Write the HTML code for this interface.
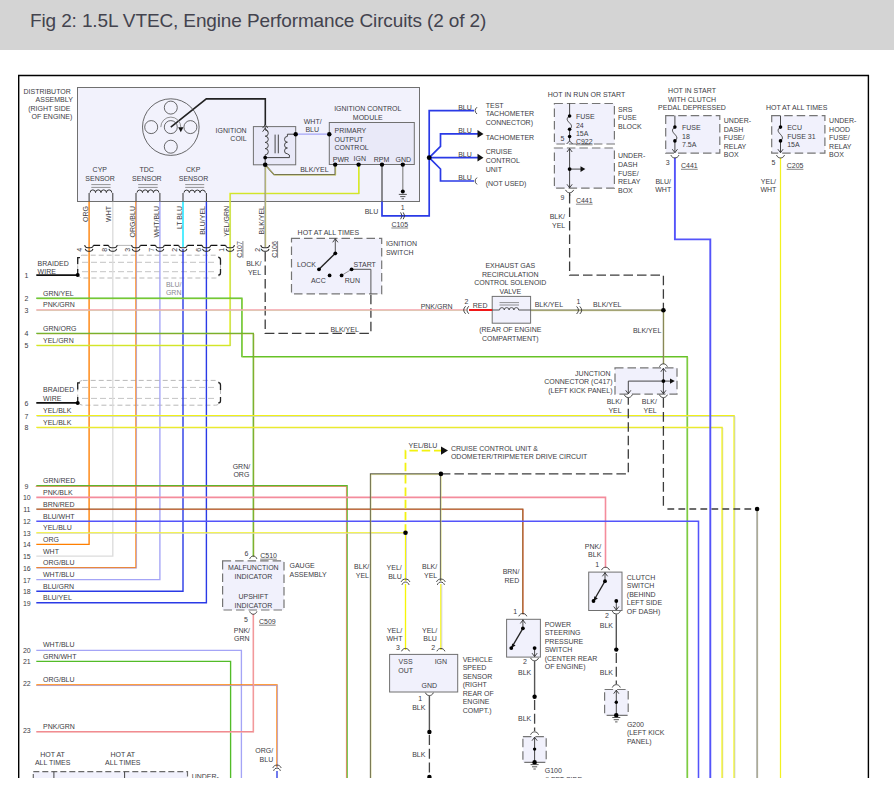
<!DOCTYPE html>
<html lang="en"><head><meta charset="utf-8"><title>Fig 2: 1.5L VTEC, Engine Performance Circuits (2 of 2)</title>
<style>
html,body{margin:0;padding:0;background:#fff;}
body{width:894px;height:807px;overflow:hidden;position:relative;font-family:"Liberation Sans",Arial,sans-serif;}
.hdr{position:absolute;left:0;top:0;width:894px;height:49.5px;background:#d4d4d4;}
.hdr span{position:absolute;left:30px;top:8px;font-size:19px;line-height:26px;color:#43434e;letter-spacing:-0.125px;white-space:nowrap;}
svg{position:absolute;left:0;top:0;}
</style></head><body>
<div class="hdr"><span>Fig 2: 1.5L VTEC, Engine Performance Circuits (2 of 2)</span></div>
<svg width="894" height="778" viewBox="0 0 894 778">
<g fill="none" stroke-linecap="butt" stroke-linejoin="miter">
<rect x="77.5" y="87.5" width="342.0" height="114.0" fill="#f2f2fc" stroke="#707070" stroke-width="1"/>
<rect x="253.4" y="126.6" width="42.3" height="38.2" fill="#e9e9f8" stroke="#707070" stroke-width="1"/>
<rect x="329.3" y="122.5" width="85.0" height="42.0" fill="#e9e9f8" stroke="#707070" stroke-width="1"/>
<rect x="291.5" y="238.3" width="90.2" height="55.6" fill="#f1f1fc" stroke="#757575" stroke-width="1.2" stroke-dasharray="8.5 4"/>
<rect x="554.4" y="103.5" width="60.0" height="40.5" fill="#f1f1fc" stroke="#757575" stroke-width="1.2" stroke-dasharray="8.5 4"/>
<rect x="554.4" y="148" width="60.0" height="40.2" fill="#f1f1fc" stroke="#757575" stroke-width="1.2" stroke-dasharray="8.5 4"/>
<rect x="665.7" y="115.6" width="54.1" height="37.6" fill="#f1f1fc" stroke="#757575" stroke-width="1.2" stroke-dasharray="8.5 4"/>
<rect x="771.7" y="115.6" width="53.2" height="37.6" fill="#f1f1fc" stroke="#757575" stroke-width="1.2" stroke-dasharray="8.5 4"/>
<rect x="492.2" y="296.4" width="38.4" height="26.8" fill="#f1f1fc" stroke="#707070" stroke-width="1"/>
<rect x="615" y="367.8" width="62.0" height="26.4" fill="#f1f1fc" stroke="#757575" stroke-width="1.2" stroke-dasharray="8.5 4"/>
<rect x="222.6" y="560.9" width="61.4" height="49.1" fill="#f1f1fc" stroke="#757575" stroke-width="1.2" stroke-dasharray="8.5 4"/>
<rect x="389.6" y="654.4" width="68.1" height="37.6" fill="#f1f1fc" stroke="#707070" stroke-width="1"/>
<rect x="506.6" y="619.3" width="33.8" height="37.8" fill="#f1f1fc" stroke="#707070" stroke-width="1"/>
<rect x="588.7" y="572.1" width="33.3" height="38.4" fill="#f1f1fc" stroke="#707070" stroke-width="1"/>
<rect x="522.9" y="736.6" width="23.3" height="25.8" fill="#f1f1fc" stroke="#757575" stroke-width="1.2" stroke-dasharray="8.5 4"/>
<rect x="604.6" y="689.5" width="23.6" height="25.8" fill="#f1f1fc" stroke="#757575" stroke-width="1.2" stroke-dasharray="8.5 4"/>
<rect x="33.3" y="771.7" width="154.2" height="12" fill="#f1f1fc" stroke="#6a6a6a" stroke-width="1.2" stroke-dasharray="6 3"/>
<path d="M53.9,771.7 V778 M124.6,771.7 V778" stroke="#444" stroke-width="1"/>
<rect x="77.7" y="255.2" width="142.8" height="22.8" rx="5" fill="none" stroke="#b8b8b8" stroke-width="1" stroke-dasharray="5 3"/>
<path d="M82,262.3 H217 M82,271.7 H217" stroke="#c4c4c4" stroke-width="1" stroke-dasharray="6 3"/>
<path d="M80,257.7 H77.7 V264.2 M77.7,269.1 V275.1" stroke="#222" stroke-width="1.3"/>
<path d="M218.2,257.4 Q220.5,257.4 220.5,259.7 V264.7 M220.5,269.1 V273.1 Q220.5,275.1 218.2,275.1" stroke="#222" stroke-width="1.3"/>
<rect x="77.7" y="380.4" width="142.8" height="24.8" rx="5" fill="none" stroke="#b8b8b8" stroke-width="1" stroke-dasharray="5 3"/>
<path d="M82,387.4 H217 M82,398.4 H217" stroke="#c4c4c4" stroke-width="1" stroke-dasharray="6 3"/>
<path d="M80,382.9 H77.7 V389.4 M77.7,396.9 V402.9" stroke="#222" stroke-width="1.3"/>
<path d="M218.2,382.6 Q220.5,382.6 220.5,384.9 V389.9 M220.5,396.9 V400.9 Q220.5,402.9 218.2,402.9" stroke="#222" stroke-width="1.3"/>
<path d="M89.1,201.5 V544.3 H36.3" stroke="#ff7f00" stroke-width="1.35"/>
<path d="M112.8,201.5 V556.1 H36.3" stroke="#dcdcdc" stroke-width="1.35"/>
<path d="M136,201.5 V567.6 H36.3" stroke="#ff7f00" stroke-width="1.35"/>
<path d="M136,201.5 V567.6 H36.3" stroke="#a4a4f6" stroke-width="0.7" transform="translate(0.55 0.55)"/>
<path d="M159.9,201.5 V579.6 H36.3" stroke="#a4a4f6" stroke-width="1.35"/>
<path d="M183,201.5 V247" stroke="#00e4ff" stroke-width="1.35"/>
<path d="M183,249 V591.2 H36.3" stroke="#2a3ae6" stroke-width="1.4"/>
<path d="M206.4,201.5 V602.7 H36.3" stroke="#2a3ae6" stroke-width="1.4"/>
<path d="M36.3,345.3 H230 V193.3 H358.7 V164.6" stroke="#e2ee1e" stroke-width="1.35"/>
<path d="M36.3,345.3 H230 V193.3 H358.7 V164.6" stroke="#b8d440" stroke-width="0.55" transform="translate(0.55 0.55)"/>
<path d="M265.2,164.8 V247" stroke="#8c8c84" stroke-width="1.35"/>
<path d="M265.2,164.8 V247" stroke="#c8c860" stroke-width="0.7" transform="translate(0.55 0.55)"/>
<path d="M265.2,252 V333.3 H370.9 V293.9" stroke="#3c3c3c" stroke-width="1.3" stroke-dasharray="9.5 4"/>
<path d="M36.3,298.2 H241.9 V356.6 H687.2 V778" stroke="#52bc28" stroke-width="1.35"/>
<path d="M36.3,298.2 H241.9 V356.6 H687.2 V778" stroke="#9ad23a" stroke-width="0.7" transform="translate(0.55 0.55)"/>
<path d="M36.3,310 H466" stroke="#f4a0a8" stroke-width="1.3"/>
<path d="M36.3,310 H466" stroke="#c8d4a8" stroke-width="0.5" transform="translate(0.55 0.55)"/>
<path d="M469,310 H492.2" stroke="#f01818" stroke-width="2"/>
<path d="M530.6,310.2 H663.4 V364" stroke="#6c6c4c" stroke-width="1.2"/>
<path d="M530.6,310.2 H663.4 V364" stroke="#c0c070" stroke-width="0.6" transform="translate(0.55 0.55)"/>
<path d="M36.3,333.3 H253.3 V556.6" stroke="#52bc28" stroke-width="1.35"/>
<path d="M36.3,333.3 H253.3 V556.6" stroke="#b0a030" stroke-width="0.7" transform="translate(0.55 0.55)"/>
<path d="M36.3,415.6 H734.1 V778" stroke="#f6f608" stroke-width="1.35"/>
<path d="M36.3,415.6 H734.1 V778" stroke="#b8c4d4" stroke-width="0.7" transform="translate(0.8 0.8)"/>
<path d="M36.3,427.3 H722.1 V778" stroke="#f6f608" stroke-width="1.35"/>
<path d="M36.3,427.3 H722.1 V778" stroke="#d0d090" stroke-width="0.6" transform="translate(0.7 0.7)"/>
<path d="M36.3,485.7 H347.1 V778" stroke="#52bc28" stroke-width="1.35"/>
<path d="M36.3,485.7 H347.1 V778" stroke="#f07050" stroke-width="0.7" transform="translate(-0.7 0.7)"/>
<path d="M36.3,497.4 H605.5 V567.9" stroke="#f48c9c" stroke-width="1.6"/>
<path d="M36.3,509 H522.8 V614.2" stroke="#9a561a" stroke-width="1.25"/>
<path d="M36.3,509 H522.8 V614.2" stroke="#d85838" stroke-width="0.45" transform="translate(0.55 0.55)"/>
<path d="M36.3,521.2 H698.5 V778" stroke="#5454fa" stroke-width="1.55"/>
<path d="M36.3,532.8 H405.5" stroke="#f6f608" stroke-width="1.35"/>
<path d="M36.3,532.8 H405.5" stroke="#d0d0e8" stroke-width="0.7" transform="translate(0.55 0.55)"/>
<path d="M405.5,532.8 V450.6 H441" stroke="#f2f210" stroke-width="1.8" stroke-dasharray="8.5 3.8"/>
<path d="M405.5,532.8 V581" stroke="#f6f608" stroke-width="1.3"/>
<path d="M406.5,532.8 V581" stroke="#b8b8f0" stroke-width="0.6"/>
<path d="M405.5,584 V650" stroke="#f6f608" stroke-width="1.35"/>
<path d="M370.4,778 V473.9 H440.9" stroke="#62624c" stroke-width="1.1"/>
<path d="M370.4,778 V473.9 H440.9" stroke="#c0c060" stroke-width="0.5" transform="translate(0.7 0.7)"/>
<path d="M440.4,473.9 V581" stroke="#5a5a52" stroke-width="1.0"/>
<path d="M441.3,473.9 V581" stroke="#d4d468" stroke-width="0.6"/>
<path d="M440.9,584 V650" stroke="#f6f608" stroke-width="1.3"/>
<path d="M441.9,584 V650" stroke="#b8b8f0" stroke-width="0.6"/>
<path d="M440.9,473.9 H628.3 V398" stroke="#3c3c3c" stroke-width="1.3" stroke-dasharray="9.5 4"/>
<path d="M663.4,398 V509" stroke="#3c3c3c" stroke-width="1.3" stroke-dasharray="9.8 4.2"/>
<path d="M663.4,509 H757.1" stroke="#3c3c3c" stroke-width="1.3" stroke-dasharray="6.8 4.2" stroke-dashoffset="-4"/>
<path d="M757.1,509 V778" stroke="#8c8c84" stroke-width="1.35"/>
<path d="M757.1,509 V778" stroke="#b0b090" stroke-width="0.7" transform="translate(0.55 0.55)"/>
<path d="M569.6,194 V275.1 H663.4 V310.2" stroke="#3c3c3c" stroke-width="1.3" stroke-dasharray="9.5 4"/>
<path d="M674.9,157.7 V239.4 H710.3 V778" stroke="#5454fa" stroke-width="1.9"/>
<path d="M780.5,157.7 V778" stroke="#f2f220" stroke-width="1.25"/>
<path d="M36.3,650.4 H241.4 V778" stroke="#a4a4f6" stroke-width="1.35"/>
<path d="M36.3,661.4 H230.6 V778" stroke="#52bc28" stroke-width="1.35"/>
<path d="M36.3,685 H277 V767" stroke="#ff7f00" stroke-width="1.35"/>
<path d="M36.3,685 H277 V767" stroke="#a4a4f6" stroke-width="0.7" transform="translate(0.55 0.55)"/>
<path d="M277,771 V778" stroke="#2a3ae6" stroke-width="1.35"/>
<path d="M36.3,731.8 H253.3 V614" stroke="#f0868e" stroke-width="1.4"/>
<path d="M36.3,731.8 H253.3 V614" stroke="#f4c0b8" stroke-width="0.5" transform="translate(0.55 0.55)"/>
<path d="M36.3,275.1 H77.7" stroke="#111" stroke-width="1.6"/>
<path d="M36.3,402.9 H77.7" stroke="#111" stroke-width="1.6"/>
<circle cx="77.7" cy="275.1" r="2" fill="#000"/>
<circle cx="77.7" cy="402.9" r="2" fill="#000"/>
<path d="M382,164.6 V201.5" stroke="#333" stroke-width="1.1"/>
<path d="M382,201.5 V215.8 H429.2 V110.6 H474" stroke="#2a3ae6" stroke-width="1.7"/>
<path d="M429.2,157.7 L440.5,146.4 V133.9 H478 M429.2,157.7 H478 M429.2,157.7 L440.5,169 V181 H474" stroke="#2a3ae6" stroke-width="1.7"/>
<path d="M295.7,134.2 H329.3" stroke="#a4a4f6" stroke-width="1.2"/>
<path d="M265.2,164.8 L274,174.6 H335.2 V164.6" stroke="#55554a" stroke-width="1.35"/>
<path d="M265.2,164.8 L274,174.6 H335.2 V164.6" stroke="#d8d860" stroke-width="0.7" transform="translate(0.55 0.55)"/>
<path d="M402.8,164.6 V191.6" stroke="#888" stroke-width="1.2"/>
<path d="M398.8,194.4 H406.8 M400.2,196.6 H405.40000000000003 M401.6,198.8 H404.0" stroke="#444" stroke-width="0.9"/>
<path d="M170.8,127.1 L206.3,98.9 H265.3 V125" stroke="#222" stroke-width="1.6"/>
<g stroke="#444" stroke-width="0.8">
<circle cx="170.8" cy="127.1" r="28.3"/>
<circle cx="170.8" cy="107.6" r="6.5"/>
<circle cx="151.2" cy="127.1" r="6.5"/>
<circle cx="190.4" cy="127.1" r="6.5"/>
<circle cx="170.8" cy="146.7" r="6.5"/>
<circle cx="170.8" cy="127.1" r="6.5"/>
<path d="M160.8,127.1 A10,10 0 0 1 180.8,127.1" stroke="#777"/>
</g>
<path d="M178.2,127.2 H183.4 L180.8,132.2 Z" fill="#111" stroke="none"/>
<path d="M89.1,201.5 V193 M112.8,201.5 V193 M90.1,192.6 A2.71,2.71 0 0 1 95.52,192.6 A2.71,2.71 0 0 1 100.95,192.6 A2.71,2.71 0 0 1 106.38,192.6 A2.71,2.71 0 0 1 111.80,192.6 " stroke="#333" stroke-width="1"/>
<path d="M91.3,184.6 H110.6 M91.3,187.4 H110.6" stroke="#777" stroke-width="0.8"/>
<path d="M136,201.5 V193 M159.9,201.5 V193 M137,192.6 A2.74,2.74 0 0 1 142.47,192.6 A2.74,2.74 0 0 1 147.95,192.6 A2.74,2.74 0 0 1 153.43,192.6 A2.74,2.74 0 0 1 158.90,192.6 " stroke="#333" stroke-width="1"/>
<path d="M138.2,184.6 H157.70000000000002 M138.2,187.4 H157.70000000000002" stroke="#777" stroke-width="0.8"/>
<path d="M183,201.5 V193 M206.4,201.5 V193 M184,192.6 A2.68,2.68 0 0 1 189.35,192.6 A2.68,2.68 0 0 1 194.70,192.6 A2.68,2.68 0 0 1 200.05,192.6 A2.68,2.68 0 0 1 205.40,192.6 " stroke="#333" stroke-width="1"/>
<path d="M185.2,184.6 H204.20000000000002 M185.2,187.4 H204.20000000000002" stroke="#777" stroke-width="0.8"/>
<g stroke="#333" stroke-width="0.9">
<path d="M265.2,126.6 V130 A3,3 0 0 1 265.2,136.2 A3,3 0 0 1 265.2,142.4 A3,3 0 0 1 265.2,148.6 A3,3 0 0 1 265.2,154.8 V164.8"/>
<path d="M275.1,134.6 V153.3 M278.3,134.6 V153.3"/>
<path d="M295.7,134.2 H287.4 V136.4 A2.9,2.9 0 0 0 287.4,142.2 A2.9,2.9 0 0 0 287.4,148.0 A2.9,2.9 0 0 0 287.4,153.8 L289.4,155 V157.6 H265.2"/>
</g>
<path d="M262.59999999999997,128.1 L265.2,124.6 L267.8,128.1" stroke="#333" stroke-width="0.9"/>
<path d="M262.59999999999997,131.7 L265.2,128.2 L267.8,131.7" stroke="#333" stroke-width="0.9"/>
<circle cx="265.2" cy="157.6" r="1.9" fill="#000"/>
<circle cx="265.2" cy="164.8" r="2.3" fill="#000"/>
<circle cx="295.7" cy="134.2" r="2.2" fill="#000"/>
<circle cx="329.3" cy="134.2" r="2.2" fill="#000"/>
<circle cx="335.2" cy="164.6" r="2.2" fill="#000"/>
<circle cx="358.6" cy="164.6" r="2.2" fill="#000"/>
<circle cx="382.0" cy="164.6" r="2.2" fill="#000"/>
<circle cx="402.8" cy="164.6" r="2.2" fill="#000"/>
<circle cx="402.8" cy="191.4" r="2.0" fill="#000"/>
<circle cx="429.2" cy="157.7" r="2.4" fill="#000"/>
<path d="M477.5,130 L483.5,133.9 L477.5,137.8 Z M477.5,153.8 L483.5,157.7 L477.5,161.6 Z" fill="#111" stroke="none"/>
<path d="M477,107.2 Q473.2,110.6 477,114 M477,177.6 Q473.2,181 477,184.4" stroke="#333" stroke-width="0.9"/>
<path d="M400.6,212.4 Q403.6,215.8 400.6,219.2 M403.2,212.4 Q406.2,215.8 403.2,219.2" stroke="#333" stroke-width="0.9"/>
<path d="M93.5,245.4 H100.1 M103.4,245.4 H108.39999999999999" stroke="#111" stroke-width="1.3"/>
<path d="M117.2,245.4 H131.6" stroke="#999" stroke-width="0.7"/>
<path d="M140.4,245.4 H147.0 M150.5,245.4 H155.5" stroke="#111" stroke-width="1.3"/>
<path d="M164.3,245.4 H170.9 M173.6,245.4 H178.6" stroke="#111" stroke-width="1.3"/>
<path d="M187.4,245.4 H194.0 M197.0,245.4 H202.0" stroke="#111" stroke-width="1.3"/>
<path d="M210.8,245.4 H217.4 M220.6,245.4 H225.6" stroke="#111" stroke-width="1.3"/>
<path d="M84.6,245.2 Q85.3,247.8 87.7,247.8 H90.5 Q92.9,247.8 93.6,245.2" stroke="#2a2a2a" stroke-width="1.1"/>
<path d="M85.2,248.9 Q85.9,251.2 87.9,251.2 H90.3 Q92.3,251.2 93.0,248.9" stroke="#2a2a2a" stroke-width="1.1"/>
<path d="M108.3,245.2 Q109.0,247.8 111.4,247.8 H114.2 Q116.6,247.8 117.3,245.2" stroke="#2a2a2a" stroke-width="1.1"/>
<path d="M108.9,248.9 Q109.6,251.2 111.6,251.2 H114.0 Q116.0,251.2 116.7,248.9" stroke="#2a2a2a" stroke-width="1.1"/>
<path d="M131.5,245.2 Q132.2,247.8 134.6,247.8 H137.4 Q139.8,247.8 140.5,245.2" stroke="#2a2a2a" stroke-width="1.1"/>
<path d="M132.1,248.9 Q132.8,251.2 134.8,251.2 H137.2 Q139.2,251.2 139.9,248.9" stroke="#2a2a2a" stroke-width="1.1"/>
<path d="M155.4,245.2 Q156.1,247.8 158.5,247.8 H161.3 Q163.7,247.8 164.4,245.2" stroke="#2a2a2a" stroke-width="1.1"/>
<path d="M156.0,248.9 Q156.7,251.2 158.7,251.2 H161.1 Q163.1,251.2 163.8,248.9" stroke="#2a2a2a" stroke-width="1.1"/>
<path d="M178.5,245.2 Q179.2,247.8 181.6,247.8 H184.4 Q186.8,247.8 187.5,245.2" stroke="#2a2a2a" stroke-width="1.1"/>
<path d="M179.1,248.9 Q179.8,251.2 181.8,251.2 H184.2 Q186.2,251.2 186.9,248.9" stroke="#2a2a2a" stroke-width="1.1"/>
<path d="M201.9,245.2 Q202.6,247.8 205.0,247.8 H207.8 Q210.2,247.8 210.9,245.2" stroke="#2a2a2a" stroke-width="1.1"/>
<path d="M202.5,248.9 Q203.2,251.2 205.2,251.2 H207.6 Q209.6,251.2 210.3,248.9" stroke="#2a2a2a" stroke-width="1.1"/>
<path d="M225.5,245.2 Q226.2,247.8 228.6,247.8 H231.4 Q233.8,247.8 234.5,245.2" stroke="#2a2a2a" stroke-width="1.1"/>
<path d="M226.1,248.9 Q226.8,251.2 228.8,251.2 H231.2 Q233.2,251.2 233.9,248.9" stroke="#2a2a2a" stroke-width="1.1"/>
<path d="M260.7,245.2 Q261.4,247.8 263.8,247.8 H266.6 Q269.0,247.8 269.7,245.2" stroke="#2a2a2a" stroke-width="1.1"/>
<path d="M261.3,248.9 Q262.0,251.2 264.0,251.2 H266.4 Q268.4,251.2 269.1,248.9" stroke="#2a2a2a" stroke-width="1.1"/>
<g stroke="#444" stroke-width="0.9">
<path d="M335.3,238.3 V253.3"/>
<path d="M351.6,269.3 H370.9 V293.9"/>
<path d="M341.6,275.4 L351.6,269.3" stroke="#888"/>
</g>
<path d="M335.3,253.3 L319,269.3" stroke="#222" stroke-width="1.4"/>
<path d="M332.7,242.3 L335.3,238.8 L337.90000000000003,242.3" stroke="#333" stroke-width="0.9"/>
<circle cx="335.3" cy="253.3" r="1.9" fill="#000"/>
<circle cx="319.0" cy="269.3" r="1.9" fill="#000"/>
<circle cx="329.6" cy="275.4" r="1.9" fill="#000"/>
<circle cx="341.6" cy="275.4" r="1.9" fill="#000"/>
<circle cx="351.6" cy="269.3" r="1.9" fill="#000"/>
<path d="M569.6,103.5 V116 C561.6,121.3 576.6,123.9 569.6,129.2 V141" stroke="#333" stroke-width="0.9"/>
<circle cx="569.6" cy="116.0" r="1.8" fill="#000"/>
<circle cx="569.6" cy="129.2" r="1.8" fill="#000"/>
<circle cx="569.6" cy="136.5" r="1.8" fill="#000"/>
<path d="M566.6,144 L569.6,141 L572.6,144" stroke="#333" stroke-width="0.9"/>
<path d="M674.9,115.6 V127.1 C666.9,132.6 681.9,135.4 674.9,140.9 V152.7" stroke="#333" stroke-width="0.9"/>
<circle cx="674.9" cy="127.1" r="1.8" fill="#000"/>
<circle cx="674.9" cy="140.9" r="1.8" fill="#000"/>
<path d="M672.3,149.2 L674.9,152.7 L677.5,149.2" stroke="#333" stroke-width="0.9"/>
<path d="M780.5,115.6 V127.1 C772.5,132.6 787.5,135.4 780.5,140.9 V152.7" stroke="#333" stroke-width="0.9"/>
<circle cx="780.5" cy="127.1" r="1.8" fill="#000"/>
<circle cx="780.5" cy="140.9" r="1.8" fill="#000"/>
<path d="M777.9,149.2 L780.5,152.7 L783.1,149.2" stroke="#333" stroke-width="0.9"/>
<path d="M670.9,155.1 C672.3,158.9 677.5,158.9 678.9,155.1" stroke="#333" stroke-width="0.9"/>
<path d="M776.5,155.1 C777.9,158.9 783.1,158.9 784.5,155.1" stroke="#333" stroke-width="0.9"/>
<path d="M569.6,148.5 V187.8 M569.6,169.1 H581" stroke="#333" stroke-width="0.9"/>
<path d="M567.0,152.0 L569.6,148.5 L572.2,152.0" stroke="#333" stroke-width="0.9"/>
<path d="M567.0,184.3 L569.6,187.8 L572.2,184.3" stroke="#333" stroke-width="0.9"/>
<circle cx="569.6" cy="169.1" r="1.9" fill="#000"/>
<path d="M580.5,166.3 L585.3,169.1 L580.5,171.9 Z" fill="#111" stroke="none"/>
<path d="M565.6,189.9 C567.0,193.7 572.2,193.7 573.6,189.9" stroke="#333" stroke-width="0.9"/>
<path d="M569.6,193 V196" stroke="#333" stroke-width="1.2"/>
<path d="M492.2,310 H499.5 A2.4,2.4 0 0 1 504.3,310 A2.4,2.4 0 0 1 509.1,310 A2.4,2.4 0 0 1 513.9,310 A2.4,2.4 0 0 1 518.7,310 H530.6" stroke="#444" stroke-width="0.9"/>
<path d="M499.5,302.6 H519 M499.5,305 H519" stroke="#777" stroke-width="0.8"/>
<path d="M465.6,306.2 Q461.8,310 465.6,313.8 M468.8,306.2 Q465,310 468.8,313.8" stroke="#333" stroke-width="0.9"/>
<path d="M576.6,306.4 Q580.4,310.2 576.6,314 M579.8,306.4 Q583.6,310.2 579.8,314" stroke="#333" stroke-width="0.9"/>
<circle cx="663.4" cy="310.2" r="2.3" fill="#000"/>
<path d="M663.4,368.3 V393.8 M663.4,381.1 H671 M663.4,381.1 H628.3 V393.8" stroke="#333" stroke-width="0.9"/>
<path d="M660.8,371.8 L663.4,368.3 L666.0,371.8" stroke="#333" stroke-width="0.9"/>
<path d="M660.8,390.3 L663.4,393.8 L666.0,390.3" stroke="#333" stroke-width="0.9"/>
<path d="M625.6999999999999,390.3 L628.3,393.8 L630.9,390.3" stroke="#333" stroke-width="0.9"/>
<circle cx="663.4" cy="381.1" r="1.9" fill="#000"/>
<path d="M670,378.5 L674.8,381.1 L670,383.7 Z" fill="#111" stroke="none"/>
<path d="M659.4,366.7 C660.8,362.9 666.0,362.9 667.4,366.7" stroke="#333" stroke-width="0.9"/>
<path d="M659.4,394.7 C660.8,398.5 666.0,398.5 667.4,394.7" stroke="#333" stroke-width="0.9"/>
<path d="M624.3,394.7 C625.7,398.5 630.9,398.5 632.3,394.7" stroke="#333" stroke-width="0.9"/>
<circle cx="440.9" cy="473.9" r="2.3" fill="#000"/>
<circle cx="405.5" cy="532.8" r="2.3" fill="#000"/>
<circle cx="757.1" cy="509.0" r="2.3" fill="#000"/>
<path d="M441,446.4 L448,450.6 L441,454.8 Z" fill="#111" stroke="none"/>
<path d="M401.1,581.9 C402.6,578.1 408.4,578.1 409.9,581.9" stroke="#333" stroke-width="0.9"/>
<path d="M401.9,584.9 C403.2,581.1 407.8,581.1 409.1,584.9" stroke="#333" stroke-width="0.9"/>
<path d="M401.5,651.3 C402.9,647.5 408.1,647.5 409.5,651.3" stroke="#333" stroke-width="0.9"/>
<path d="M436.5,581.9 C438.0,578.1 443.8,578.1 445.3,581.9" stroke="#333" stroke-width="0.9"/>
<path d="M437.3,584.9 C438.6,581.1 443.2,581.1 444.5,584.9" stroke="#333" stroke-width="0.9"/>
<path d="M436.9,651.3 C438.3,647.5 443.5,647.5 444.9,651.3" stroke="#333" stroke-width="0.9"/>
<path d="M249.7,558.9 C251.0,555.1 255.6,555.1 256.9,558.9" stroke="#333" stroke-width="0.9"/>
<path d="M249.7,611.4 C251.0,615.2 255.6,615.2 256.9,611.4" stroke="#333" stroke-width="0.9"/>
<path d="M272.8,767.9 C274.3,764.1 279.7,764.1 281.2,767.9" stroke="#333" stroke-width="0.9"/>
<path d="M273.6,770.9 C274.8,767.1 279.2,767.1 280.4,770.9" stroke="#333" stroke-width="0.9"/>
<path d="M601.5,570.1 C602.9,566.3 608.1,566.3 609.5,570.1" stroke="#333" stroke-width="0.9"/>
<path d="M518.8,616.3 C520.2,612.5 525.4,612.5 526.8,616.3" stroke="#333" stroke-width="0.9"/>
<path d="M425.4,692.7 C426.8,696.5 432.0,696.5 433.4,692.7" stroke="#333" stroke-width="0.9"/>
<path d="M429.4,696 V732" stroke="#555" stroke-width="1.4"/>
<path d="M429.4,735 V778" stroke="#444" stroke-width="1.3" stroke-dasharray="10 3.8"/>
<circle cx="429.4" cy="732.0" r="2.2" fill="#000"/>
<circle cx="429.4" cy="777.0" r="2.2" fill="#000"/>
<path d="M522.9,619.3 V628.3 M534.6,648.1 V656.6" stroke="#333" stroke-width="0.9"/>
<path d="M522.9,628.3 L511.3,648.1" stroke="#222" stroke-width="1.3"/>
<path d="M520.3,623.5 L522.9,620 L525.5,623.5" stroke="#333" stroke-width="0.9"/>
<path d="M532.0,653.1 L534.6,656.6 L537.2,653.1" stroke="#333" stroke-width="0.9"/>
<path d="M511.3,648.1 L515.6,645.6 L512.2,643.4 Z" fill="#111" stroke="none"/>
<circle cx="522.9" cy="628.3" r="1.9" fill="#000"/>
<circle cx="511.3" cy="648.1" r="1.9" fill="#000"/>
<circle cx="534.6" cy="648.1" r="1.9" fill="#000"/>
<path d="M530.6,657.9 C532.0,661.7 537.2,661.7 538.6,657.9" stroke="#333" stroke-width="0.9"/>
<path d="M534.6,661 V696.7" stroke="#555" stroke-width="1.4"/>
<path d="M534.6,700 V731" stroke="#444" stroke-width="1.3" stroke-dasharray="10 3.8"/>
<circle cx="534.6" cy="696.7" r="2.2" fill="#000"/>
<path d="M530.6,734.7 C532.0,730.9 537.2,730.9 538.6,734.7" stroke="#333" stroke-width="0.9"/>
<path d="M534.6,737 V762.4" stroke="#333" stroke-width="0.9"/>
<path d="M532.0,740.7 L534.6,737.2 L537.2,740.7" stroke="#333" stroke-width="0.9"/>
<circle cx="534.6" cy="749.1" r="1.7" fill="#000"/>
<circle cx="534.6" cy="762.4" r="2.3" fill="#000"/>
<path d="M530.6,764.6 H538.6 M532.0,766.8000000000001 H537.2 M533.4,769.0 H535.8000000000001" stroke="#444" stroke-width="0.9"/>
<path d="M605,572.1 V581.2 M616.3,601 V610" stroke="#333" stroke-width="0.9"/>
<path d="M605,581.2 L593.5,601" stroke="#222" stroke-width="1.3"/>
<path d="M602.4,576.3 L605,572.8 L607.6,576.3" stroke="#333" stroke-width="0.9"/>
<path d="M613.6999999999999,606.5 L616.3,610 L618.9,606.5" stroke="#333" stroke-width="0.9"/>
<path d="M593.5,601 L597.8,598.5 L594.4,596.3 Z" fill="#111" stroke="none"/>
<circle cx="605.0" cy="581.2" r="1.9" fill="#000"/>
<circle cx="593.5" cy="601.0" r="1.9" fill="#000"/>
<circle cx="616.3" cy="601.0" r="1.9" fill="#000"/>
<path d="M612.3,611.1 C613.7,614.9 618.9,614.9 620.3,611.1" stroke="#333" stroke-width="0.9"/>
<path d="M616.3,614.2 V649.6" stroke="#555" stroke-width="1.4"/>
<path d="M616.3,653 V684" stroke="#444" stroke-width="1.3" stroke-dasharray="10 3.8"/>
<circle cx="616.3" cy="649.6" r="2.2" fill="#000"/>
<path d="M612.3,687.5 C613.7,683.7 618.9,683.7 620.3,687.5" stroke="#333" stroke-width="0.9"/>
<path d="M616.3,690 V715.3" stroke="#333" stroke-width="0.9"/>
<path d="M613.6999999999999,693.7 L616.3,690.2 L618.9,693.7" stroke="#333" stroke-width="0.9"/>
<circle cx="616.3" cy="702.2" r="1.7" fill="#000"/>
<circle cx="616.3" cy="715.3" r="2.3" fill="#000"/>
<path d="M612.3,717.5 H620.3 M613.6999999999999,719.7 H618.9 M615.0999999999999,721.9 H617.5" stroke="#444" stroke-width="0.9"/>
<path d="M18.7,778 V75.5 H868.4 V778" stroke="#000" stroke-width="1.4"/>
</g>
<g font-family="Liberation Sans, Arial, sans-serif" font-size="7" fill="#3c3c44">
<text x="23.5" y="94.2" text-anchor="start">DISTRIBUTOR</text>
<text x="35.6" y="102.3" text-anchor="start">ASSEMBLY</text>
<text x="28.2" y="110.9" text-anchor="start">(RIGHT SIDE</text>
<text x="31.5" y="119.1" text-anchor="start">OF ENGINE)</text>
<text x="99.8" y="172.2" text-anchor="middle">CYP</text>
<text x="100.1" y="181.0" text-anchor="middle">SENSOR</text>
<text x="146.6" y="172.2" text-anchor="middle">TDC</text>
<text x="146.9" y="181.0" text-anchor="middle">SENSOR</text>
<text x="193.2" y="172.2" text-anchor="middle">CKP</text>
<text x="193.5" y="181.0" text-anchor="middle">SENSOR</text>
<text x="246.7" y="133.1" text-anchor="end">IGNITION</text>
<text x="246.7" y="141.1" text-anchor="end">COIL</text>
<text x="367.8" y="110.8" text-anchor="middle">IGNITION CONTROL</text>
<text x="367.8" y="120.1" text-anchor="middle">MODULE</text>
<text x="334.5" y="133.1" text-anchor="start">PRIMARY</text>
<text x="334.5" y="141.9" text-anchor="start">OUTPUT</text>
<text x="334.5" y="150.2" text-anchor="start">CONTROL</text>
<text x="341.0" y="161.9" text-anchor="middle">PWR</text>
<text x="359.8" y="161.1" text-anchor="middle">IGN</text>
<text x="381.6" y="161.9" text-anchor="middle">RPM</text>
<text x="403.4" y="161.9" text-anchor="middle">GND</text>
<text x="312.7" y="123.9" text-anchor="middle">WHT/</text>
<text x="312.2" y="132.1" text-anchor="middle">BLU</text>
<text x="314.4" y="172.0" text-anchor="middle">BLK/YEL</text>
<text x="371.5" y="214.2" text-anchor="middle">BLU</text>
<text x="402.8" y="210.0" text-anchor="middle">1</text>
<text x="399.8" y="226.9" text-anchor="middle">C105</text>
<text x="465.0" y="109.5" text-anchor="middle">BLU</text>
<text x="465.0" y="133.1" text-anchor="middle">BLU</text>
<text x="465.0" y="156.9" text-anchor="middle">BLU</text>
<text x="465.0" y="180.0" text-anchor="middle">BLU</text>
<text x="485.7" y="108.1" text-anchor="start">TEST</text>
<text x="485.7" y="116.3" text-anchor="start">TACHOMETER</text>
<text x="485.7" y="125.1" text-anchor="start">CONNECTOR)</text>
<text x="485.7" y="140.1" text-anchor="start">TACHOMETER</text>
<text x="485.7" y="154.2" text-anchor="start">CRUISE</text>
<text x="485.7" y="163.2" text-anchor="start">CONTROL</text>
<text x="485.7" y="172.0" text-anchor="start">UNIT</text>
<text x="485.7" y="186.0" text-anchor="start">(NOT USED)</text>
<text transform="translate(87.9 206.0) rotate(-90)" text-anchor="end">ORG</text>
<text transform="translate(111.4 206.0) rotate(-90)" text-anchor="end">WHT</text>
<text transform="translate(134.9 206.0) rotate(-90)" text-anchor="end">ORG/BLU</text>
<text transform="translate(158.6 206.0) rotate(-90)" text-anchor="end">WHT/BLU</text>
<text transform="translate(181.9 206.0) rotate(-90)" text-anchor="end">LT BLU</text>
<text transform="translate(204.9 206.0) rotate(-90)" text-anchor="end">BLU/YEL</text>
<text transform="translate(228.8 206.0) rotate(-90)" text-anchor="end">YEL/GRN</text>
<text transform="translate(264.2 206.0) rotate(-90)" text-anchor="end">BLK/YEL</text>
<text transform="translate(82.3 249.7) rotate(-90)" text-anchor="middle">4</text>
<text transform="translate(106.9 249.7) rotate(-90)" text-anchor="middle">8</text>
<text transform="translate(130.4 249.7) rotate(-90)" text-anchor="middle">3</text>
<text transform="translate(153.5 249.7) rotate(-90)" text-anchor="middle">7</text>
<text transform="translate(176.9 249.7) rotate(-90)" text-anchor="middle">2</text>
<text transform="translate(200.5 249.7) rotate(-90)" text-anchor="middle">6</text>
<text transform="translate(223.9 249.7) rotate(-90)" text-anchor="middle">1</text>
<text transform="translate(259.7 249.7) rotate(-90)" text-anchor="middle">2</text>
<text transform="translate(241.8 249.5) rotate(-90)" text-anchor="middle">C107</text>
<text transform="translate(276.5 249.5) rotate(-90)" text-anchor="middle">C106</text>
<text x="253.8" y="266.0" text-anchor="middle">BLK/</text>
<text x="254.5" y="275.0" text-anchor="middle">YEL</text>
<text x="297.6" y="234.9" text-anchor="start">HOT AT ALL TIMES</text>
<text x="385.9" y="246.2" text-anchor="start">IGNITION</text>
<text x="385.9" y="254.9" text-anchor="start">SWITCH</text>
<text x="306.5" y="266.8" text-anchor="middle">LOCK</text>
<text x="318.3" y="283.4" text-anchor="middle">ACC</text>
<text x="352.4" y="283.4" text-anchor="middle">RUN</text>
<text x="364.7" y="266.8" text-anchor="middle">START</text>
<text x="344.6" y="332.2" text-anchor="middle">BLK/YEL</text>
<text x="37.6" y="266.1" text-anchor="start">BRAIDED</text>
<text x="37.6" y="273.9" text-anchor="start">WIRE</text>
<text x="43.1" y="391.9" text-anchor="start">BRAIDED</text>
<text x="43.1" y="400.9" text-anchor="start">WIRE</text>
<g fill="#8a8a92">
<text x="173.7" y="287.1" text-anchor="middle">BLU/</text>
<text x="173.7" y="295.2" text-anchor="middle">GRN</text>
</g>
<text x="26.5" y="278.0" text-anchor="middle">1</text>
<text x="26.5" y="301.1" text-anchor="middle">2</text>
<text x="43.0" y="295.8" text-anchor="start">GRN/YEL</text>
<text x="26.5" y="312.9" text-anchor="middle">3</text>
<text x="43.0" y="306.9" text-anchor="start">PNK/GRN</text>
<text x="26.5" y="336.2" text-anchor="middle">4</text>
<text x="43.0" y="330.9" text-anchor="start">GRN/ORG</text>
<text x="26.5" y="348.2" text-anchor="middle">5</text>
<text x="43.0" y="342.9" text-anchor="start">YEL/GRN</text>
<text x="26.5" y="405.8" text-anchor="middle">6</text>
<text x="26.5" y="418.5" text-anchor="middle">7</text>
<text x="43.0" y="413.2" text-anchor="start">YEL/BLK</text>
<text x="26.5" y="430.2" text-anchor="middle">8</text>
<text x="43.0" y="424.9" text-anchor="start">YEL/BLK</text>
<text x="26.5" y="488.6" text-anchor="middle">9</text>
<text x="43.0" y="483.3" text-anchor="start">GRN/RED</text>
<text x="26.8" y="500.2" text-anchor="middle">10</text>
<text x="43.0" y="495.0" text-anchor="start">PNK/BLK</text>
<text x="26.8" y="511.9" text-anchor="middle">11</text>
<text x="43.0" y="506.6" text-anchor="start">BRN/RED</text>
<text x="26.8" y="524.1" text-anchor="middle">12</text>
<text x="43.0" y="518.8" text-anchor="start">BLU/WHT</text>
<text x="26.8" y="535.6" text-anchor="middle">13</text>
<text x="43.0" y="530.4" text-anchor="start">YEL/BLU</text>
<text x="26.8" y="547.1" text-anchor="middle">14</text>
<text x="43.0" y="541.9" text-anchor="start">ORG</text>
<text x="26.8" y="559.0" text-anchor="middle">15</text>
<text x="43.0" y="553.7" text-anchor="start">WHT</text>
<text x="26.8" y="570.5" text-anchor="middle">16</text>
<text x="43.0" y="565.2" text-anchor="start">ORG/BLU</text>
<text x="26.8" y="582.5" text-anchor="middle">17</text>
<text x="43.0" y="577.2" text-anchor="start">WHT/BLU</text>
<text x="26.8" y="594.1" text-anchor="middle">18</text>
<text x="43.0" y="588.8" text-anchor="start">BLU/GRN</text>
<text x="26.8" y="605.6" text-anchor="middle">19</text>
<text x="43.0" y="600.3" text-anchor="start">BLU/YEL</text>
<text x="26.8" y="653.2" text-anchor="middle">20</text>
<text x="43.0" y="647.3" text-anchor="start">WHT/BLU</text>
<text x="26.8" y="664.2" text-anchor="middle">21</text>
<text x="43.0" y="659.0" text-anchor="start">GRN/WHT</text>
<text x="26.8" y="686.0" text-anchor="middle">22</text>
<text x="43.0" y="681.9" text-anchor="start">ORG/BLU</text>
<text x="26.8" y="732.8" text-anchor="middle">23</text>
<text x="43.0" y="729.4" text-anchor="start">PNK/GRN</text>
<text x="547.8" y="97.0" text-anchor="start">HOT IN RUN OR START</text>
<text x="575.9" y="119.3" text-anchor="start">FUSE</text>
<text x="575.9" y="127.6" text-anchor="start">24</text>
<text x="575.9" y="135.9" text-anchor="start">15A</text>
<text x="562.4" y="141.4" text-anchor="middle">5</text>
<text x="575.9" y="143.7" text-anchor="start">C922</text>
<text x="618.0" y="112.1" text-anchor="start">SRS</text>
<text x="618.0" y="120.1" text-anchor="start">FUSE</text>
<text x="618.0" y="128.9" text-anchor="start">BLOCK</text>
<text x="618.0" y="158.2" text-anchor="start">UNDER-</text>
<text x="618.0" y="167.0" text-anchor="start">DASH</text>
<text x="618.0" y="175.7" text-anchor="start">FUSE/</text>
<text x="618.0" y="184.0" text-anchor="start">RELAY</text>
<text x="618.0" y="192.8" text-anchor="start">BOX</text>
<text x="562.4" y="199.8" text-anchor="middle">9</text>
<text x="575.9" y="203.1" text-anchor="start">C441</text>
<text x="557.3" y="219.1" text-anchor="middle">BLK/</text>
<text x="558.6" y="227.9" text-anchor="middle">YEL</text>
<text x="692.0" y="93.3" text-anchor="middle">HOT IN START</text>
<text x="692.0" y="102.0" text-anchor="middle">WITH CLUTCH</text>
<text x="692.0" y="110.1" text-anchor="middle">PEDAL DEPRESSED</text>
<text x="682.0" y="130.1" text-anchor="start">FUSE</text>
<text x="682.0" y="138.9" text-anchor="start">18</text>
<text x="682.0" y="147.2" text-anchor="start">7.5A</text>
<text x="723.8" y="123.1" text-anchor="start">UNDER-</text>
<text x="723.8" y="131.9" text-anchor="start">DASH</text>
<text x="723.8" y="140.1" text-anchor="start">FUSE/</text>
<text x="723.8" y="148.9" text-anchor="start">RELAY</text>
<text x="723.8" y="157.2" text-anchor="start">BOX</text>
<text x="667.7" y="164.7" text-anchor="middle">3</text>
<text x="681.0" y="168.2" text-anchor="start">C441</text>
<text x="663.2" y="184.0" text-anchor="middle">BLU/</text>
<text x="663.2" y="192.0" text-anchor="middle">WHT</text>
<text x="765.9" y="110.1" text-anchor="start">HOT AT ALL TIMES</text>
<text x="787.2" y="130.1" text-anchor="start">ECU</text>
<text x="787.2" y="138.9" text-anchor="start">FUSE 31</text>
<text x="787.2" y="147.2" text-anchor="start">15A</text>
<text x="829.1" y="123.1" text-anchor="start">UNDER-</text>
<text x="829.1" y="131.9" text-anchor="start">HOOD</text>
<text x="829.1" y="140.1" text-anchor="start">FUSE/</text>
<text x="829.1" y="148.9" text-anchor="start">RELAY</text>
<text x="829.1" y="157.2" text-anchor="start">BOX</text>
<text x="773.4" y="164.7" text-anchor="middle">5</text>
<text x="786.7" y="168.2" text-anchor="start">C205</text>
<text x="768.4" y="184.0" text-anchor="middle">YEL/</text>
<text x="768.4" y="192.0" text-anchor="middle">WHT</text>
<text x="510.3" y="268.1" text-anchor="middle">EXHAUST GAS</text>
<text x="510.3" y="277.1" text-anchor="middle">RECIRCULATION</text>
<text x="510.3" y="285.4" text-anchor="middle">CONTROL SOLENOID</text>
<text x="510.3" y="293.9" text-anchor="middle">VALVE</text>
<text x="510.3" y="332.2" text-anchor="middle">(REAR OF ENGINE</text>
<text x="510.3" y="341.0" text-anchor="middle">COMPARTMENT)</text>
<text x="436.6" y="308.8" text-anchor="middle">PNK/GRN</text>
<text x="466.4" y="304.2" text-anchor="middle">2</text>
<text x="480.2" y="308.3" text-anchor="middle">RED</text>
<text x="548.9" y="306.9" text-anchor="middle">BLK/YEL</text>
<text x="578.4" y="304.4" text-anchor="middle">1</text>
<text x="607.3" y="306.9" text-anchor="middle">BLK/YEL</text>
<text x="647.1" y="333.3" text-anchor="middle">BLK/YEL</text>
<text x="610.5" y="376.1" text-anchor="end">JUNCTION</text>
<text x="612.5" y="384.1" text-anchor="end">CONNECTOR (C417)</text>
<text x="612.5" y="392.9" text-anchor="end">(LEFT KICK PANEL)</text>
<text x="614.3" y="404.2" text-anchor="middle">BLK/</text>
<text x="615.0" y="413.0" text-anchor="middle">YEL</text>
<text x="649.4" y="404.2" text-anchor="middle">BLK/</text>
<text x="650.1" y="413.0" text-anchor="middle">YEL</text>
<text x="423.0" y="448.1" text-anchor="middle">YEL/BLU</text>
<text x="450.9" y="450.8" text-anchor="start">CRUISE CONTROL UNIT &amp;</text>
<text x="450.9" y="459.1" text-anchor="start">ODOMETER/TRIPMETER DRIVE CIRCUIT</text>
<text x="241.4" y="469.1" text-anchor="middle">GRN/</text>
<text x="241.4" y="476.9" text-anchor="middle">ORG</text>
<text x="246.4" y="556.1" text-anchor="middle">6</text>
<text x="260.2" y="558.1" text-anchor="start">C510</text>
<text x="253.4" y="569.9" text-anchor="middle">MALFUNCTION</text>
<text x="253.4" y="579.1" text-anchor="middle">INDICATOR</text>
<text x="253.4" y="599.2" text-anchor="middle">UPSHIFT</text>
<text x="253.4" y="608.0" text-anchor="middle">INDICATOR</text>
<text x="289.5" y="567.9" text-anchor="start">GAUGE</text>
<text x="289.5" y="576.9" text-anchor="start">ASSEMBLY</text>
<text x="245.9" y="621.9" text-anchor="middle">5</text>
<text x="259.0" y="624.1" text-anchor="start">C509</text>
<text x="241.9" y="633.1" text-anchor="middle">PNK/</text>
<text x="241.9" y="640.8" text-anchor="middle">GRN</text>
<text x="361.7" y="569.1" text-anchor="middle">BLK/</text>
<text x="362.4" y="577.9" text-anchor="middle">YEL</text>
<text x="394.2" y="569.9" text-anchor="middle">YEL/</text>
<text x="395.0" y="579.1" text-anchor="middle">BLU</text>
<text x="429.6" y="569.1" text-anchor="middle">BLK/</text>
<text x="430.6" y="577.9" text-anchor="middle">YEL</text>
<text x="394.5" y="633.1" text-anchor="middle">YEL/</text>
<text x="394.5" y="640.8" text-anchor="middle">WHT</text>
<text x="429.6" y="633.1" text-anchor="middle">YEL/</text>
<text x="430.1" y="640.8" text-anchor="middle">BLU</text>
<text x="398.0" y="650.1" text-anchor="middle">3</text>
<text x="433.1" y="650.1" text-anchor="middle">2</text>
<text x="405.6" y="664.4" text-anchor="middle">VSS</text>
<text x="405.6" y="673.2" text-anchor="middle">OUT</text>
<text x="440.9" y="664.4" text-anchor="middle">IGN</text>
<text x="429.4" y="688.2" text-anchor="middle">GND</text>
<text x="420.1" y="701.0" text-anchor="middle">1</text>
<text x="418.8" y="709.8" text-anchor="middle">BLK</text>
<text x="418.8" y="757.1" text-anchor="middle">BLK</text>
<text x="462.7" y="662.1" text-anchor="start">VEHICLE</text>
<text x="462.7" y="670.2" text-anchor="start">SPEED</text>
<text x="462.7" y="679.2" text-anchor="start">SENSOR</text>
<text x="462.7" y="687.2" text-anchor="start">(RIGHT</text>
<text x="462.7" y="696.0" text-anchor="start">REAR OF</text>
<text x="462.7" y="704.2" text-anchor="start">ENGINE</text>
<text x="462.7" y="713.0" text-anchor="start">COMPT.)</text>
<text x="511.0" y="574.1" text-anchor="middle">BRN/</text>
<text x="511.8" y="582.9" text-anchor="middle">RED</text>
<text x="515.3" y="614.0" text-anchor="middle">1</text>
<text x="544.7" y="627.0" text-anchor="start">POWER</text>
<text x="544.7" y="635.1" text-anchor="start">STEERING</text>
<text x="544.7" y="644.1" text-anchor="start">PRESSURE</text>
<text x="544.7" y="652.1" text-anchor="start">SWITCH</text>
<text x="544.7" y="661.1" text-anchor="start">(CENTER REAR</text>
<text x="544.7" y="669.2" text-anchor="start">OF ENGINE)</text>
<text x="524.9" y="664.1" text-anchor="middle">2</text>
<text x="524.6" y="675.2" text-anchor="middle">BLK</text>
<text x="524.6" y="721.0" text-anchor="middle">BLK</text>
<text x="544.7" y="772.9" text-anchor="start">G100</text>
<text x="544.7" y="781.7" text-anchor="start">(LEFT SIDE</text>
<text x="593.0" y="549.1" text-anchor="middle">PNK/</text>
<text x="594.7" y="557.1" text-anchor="middle">BLK</text>
<text x="597.2" y="567.1" text-anchor="middle">1</text>
<text x="626.8" y="579.9" text-anchor="start">CLUTCH</text>
<text x="626.8" y="587.9" text-anchor="start">SWITCH</text>
<text x="626.8" y="596.7" text-anchor="start">(BEHIND</text>
<text x="626.8" y="605.0" text-anchor="start">LEFT SIDE</text>
<text x="626.8" y="613.7" text-anchor="start">OF DASH)</text>
<text x="606.9" y="618.0" text-anchor="middle">2</text>
<text x="606.4" y="628.1" text-anchor="middle">BLK</text>
<text x="606.4" y="675.2" text-anchor="middle">BLK</text>
<text x="626.9" y="727.0" text-anchor="start">G200</text>
<text x="626.9" y="735.3" text-anchor="start">(LEFT KICK</text>
<text x="626.9" y="744.1" text-anchor="start">PANEL)</text>
<text x="264.2" y="752.9" text-anchor="middle">ORG/</text>
<text x="266.4" y="761.6" text-anchor="middle">BLU</text>
<text x="52.6" y="757.1" text-anchor="middle">HOT AT</text>
<text x="52.6" y="764.9" text-anchor="middle">ALL TIMES</text>
<text x="122.8" y="757.1" text-anchor="middle">HOT AT</text>
<text x="122.8" y="764.9" text-anchor="middle">ALL TIMES</text>
<text x="191.7" y="779.2" text-anchor="start">UNDER-</text>
</g>
<path d="M391.4,228.0 h16.7 M242.9,241.1 v16.7 M277.6,241.1 v16.7 M575.9,144.8 h16.7 M575.9,204.2 h16.7 M681.0,169.3 h16.7 M786.7,169.3 h16.7 M260.2,559.2 h16.7 M259.0,625.2 h16.7" stroke="#555" stroke-width="0.7" fill="none"/>
</svg>
</body></html>
